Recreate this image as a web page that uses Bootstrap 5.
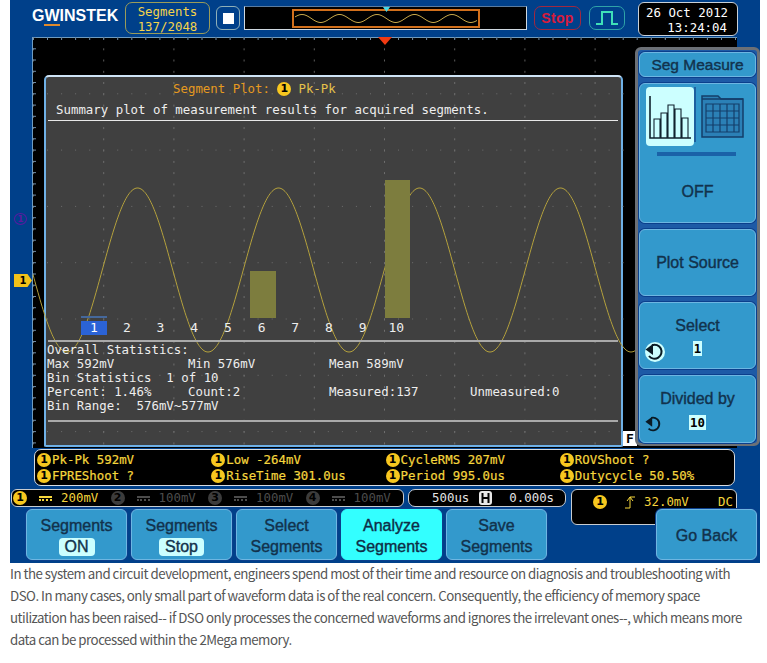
<!DOCTYPE html>
<html lang="en">
<head>
<meta charset="utf-8">
<title>Segment Plot</title>
<link href="https://cdn.jsdelivr.net/npm/bootstrap@5.3.0/dist/css/bootstrap.min.css" rel="stylesheet">
<style>
body{background:#fff;margin:0;overflow:hidden}
.dso{width:750px;height:563px;margin-left:10px;background:#00408a;position:relative;overflow:hidden}
.mono{font-family:"DejaVu Sans Mono","Liberation Mono",monospace;font-size:12.4px;line-height:14px}
.pre{white-space:pre}
.topbar{height:37px;padding-left:22px;position:relative}
.logo{width:93px;color:#fff;font:700 16px/16px "Liberation Sans",sans-serif;margin-top:-5px}
.logo u{text-decoration:none;border-bottom:2px solid #e08a2c}
.segbox{width:85px;height:32px;border:1px solid #9a9c5a;border-radius:7px;color:#f4d44a;text-align:center;margin-top:2px;padding-top:1px;line-height:15px}
.stopsq{width:24px;height:24px;border:1px solid #8fb0b8;border-radius:6px;margin:6px 4px 0 6px}
.stopsq i{display:block;width:11px;height:11px;background:#fff}
.overview{width:283px;height:24px;margin-top:6px;background:#000;border:1px solid #cfd8e0;border-top-color:#5a7ca0;position:relative}
.overview svg{position:absolute;left:0;top:0}
.stopbtn{width:47px;height:24px;margin:6px 0 0 7px;border:1px solid #a02840;border-radius:7px;color:#d81b3c;font:700 14px/22px "Liberation Sans",sans-serif;text-align:center;letter-spacing:.3px}
.pulsebtn{width:36px;height:24px;margin:6px 0 0 8px;border:1px solid #2fa3a8;border-radius:7px}
.datebox{width:100px;height:34px;margin:2px 0 0 13px;background:#000;border:1px solid #c8d0d8;border-radius:6px;color:#fff;padding:2px 4px 0 7px;line-height:15px}
.datebox div:last-child{text-align:right;padding-right:6px}
.screen{margin-left:22px;width:705px;height:411px;background:#000;position:relative;border-left:1px solid #6f9cc0;border-top:1px solid #6f9cc0}
.layer{position:absolute;left:-1px;top:-1px;z-index:1;pointer-events:none}
.wpanel{position:absolute;left:11px;top:37px;width:579px;height:372px;background:#404040;border:2px solid #6fb0e6;border-top-color:#cfe4f6;border-radius:5px 5px 2px 2px;color:#eee}
.ptitle{position:relative;z-index:2;color:#e69a1f;height:21px;padding:3px 0 0 127px}
.ptitle b{font-weight:400;color:#e6c24a;margin-left:6px}
.psub{position:relative;z-index:2;padding-left:10px;height:21px;line-height:23px}
.hr1{position:absolute;z-index:2;left:2px;width:570px;height:1px;background:#e8e8e8}
.hr2{position:absolute;z-index:2;left:2px;width:570px;height:2px;background:#a9a9a9}
.binbar{position:absolute;z-index:2;background:#7d7d3e}
.binrow{position:absolute;z-index:2;left:35px;top:244px}
.binrow span{width:33.7px;text-align:center;height:14px;color:#eee;font-size:13px}
.binrow span.on{background:#2b63d6;color:#fff;width:26px;margin:0 3px 0 0}
.seltop{position:absolute;z-index:2;left:35px;top:239px;width:26px;height:2px;background:#45689c}
.stats{position:absolute;z-index:2;left:1px;top:266px}
.stats span{width:141px;flex:none}
.ch1{position:absolute;left:-19px;top:236px;width:18px;height:13px;background:#f2c21a;color:#000;font:700 10px/13px "DejaVu Sans",sans-serif;text-align:center;clip-path:polygon(0 0,75% 0,100% 50%,75% 100%,0 100%);z-index:2}
.ch2{position:absolute;left:-19px;top:175px;width:13px;height:12px;border:1px solid #5a1aa0;border-radius:50%;color:#5a1aa0;font:700 9px/10px "DejaVu Sans",sans-serif;text-align:center;z-index:2}
.trigarrow{position:absolute;left:345px;top:-1px;width:0;height:0;border-left:7px solid transparent;border-right:7px solid transparent;border-top:8px solid #f23a12;z-index:2}
.fstrip{position:absolute;left:590px;top:393px;width:14px;height:15px;background:#fff;color:#000;font:700 13px/15px "DejaVu Sans Mono",monospace;text-align:center;z-index:2}
.menupane{position:absolute;z-index:3;left:602px;top:9px;width:125px;height:399px;background:#1d5aa6;border:3px solid #6c7076;border-radius:6px;padding:2px 1px 0 1px;gap:6px}
.kbtn{background:#3399cc;border:1px solid #6db6e2;box-shadow:0 0 0 1px #0b3f8c;border-radius:6px;color:#12324c;font:400 16px/21px "Liberation Sans",sans-serif;-webkit-text-stroke:.4px #12324c;padding:0;--bs-btn-hover-bg:#3399cc}
.kbtn.hot{background:#33ffff;color:#0c2c44;border-color:#33ffff}
.tagon{background:#ccffff;border-radius:4px;padding:0 6px;display:inline-block;line-height:18px;color:#12324c}
.tile{width:48px;height:59px;background:#ccffff;border-radius:4px;flex:none}
.slidebar{width:79px;height:4px;background:#1a62a8;margin:6px auto 0 11px}
.tabletick{width:2px;height:55px;background:#1d5f9f;margin-right:5px}
.valtag{background:#ccffff;color:#000;font-weight:700;-webkit-text-stroke:0;padding:0 1px;font-size:12.4px;line-height:14px}
.spin{position:absolute;left:4px;top:38px}
.meas{margin:1px 0 0 24px;width:701px;height:37px;background:#000;border:1px solid #d8dce0;border-radius:7px;color:#f5d63d;padding:2px 0 0 2px;-webkit-text-stroke:.2px #f5d63d}
.meas .cell{width:175px;height:16px}
.dot{flex:none;display:inline-block;width:14px;height:14px;border-radius:50%;background:#f7c71f;color:#000;font:700 11px/14px "DejaVu Sans",sans-serif;text-align:center;margin-right:1px;-webkit-text-stroke:0}
.dot.off{background:#3c3c3c;color:#000}
.chanrow{height:17px;margin-top:3px;position:relative}
.chans{margin-left:1px;width:393px;height:18px;background:#000;border:1px solid #c8ccd0;border-radius:6px;color:#f5d63d;padding-left:1px}
.chans .cell{width:100px}
.chans .dim{color:#4c4c4c}
.chans .eq{width:13px;height:5px;border-top:2px solid currentColor;border-bottom:2px dotted currentColor;margin:0 9px 0 11px;flex:none}
.tbase{margin-left:4px;width:158px;height:18px;background:#000;border:1px solid #c8ccd0;border-radius:7px;color:#e4e4e4;padding-left:23px}
.hold{margin:0 17px 0 10px}
.trig{margin-left:5px;width:166px;height:36px;background:#000;border:1px solid #c8ccd0;border-radius:6px 6px 0 6px;color:#f5d63d;padding:1px 3px 0 21px;position:relative;z-index:1}
.edge{margin:0 8px 0 16px}
.softrow{margin-top:3px;padding:0 3px 0 16px;gap:4px;position:relative;z-index:2}
.softrow .kbtn{width:101px;height:51px;padding-top:2px}
.desc{margin:0;padding:0 0 0 10px;width:746px;font-family:"Noto Sans CJK KR","Noto Sans",sans-serif;font-size:13.3px;line-height:22px;color:#555;letter-spacing:-.51px}
</style>
</head>
<body>
<div class="dso">
  <div class="topbar d-flex align-items-start">
    <div class="logo align-self-center">G<u>W</u>INSTEK</div>
    <div class="segbox mono">Segments<br>137/2048</div>
    <div class="stopsq d-flex align-items-center justify-content-center"><i></i></div>
    <div class="overview">
      <svg width="282" height="23" viewBox="243 7 282 23"><rect x="291" y="10" width="186" height="17" fill="none" stroke="#d2701c" stroke-width="2"/><path id="ovw" fill="none" stroke="#c8a84a" stroke-width="1"/><path d="M381 7h7l-3.5 5z" fill="#45d8e8"/></svg>
    </div>
    <div class="stopbtn">Stop</div>
    <div class="pulsebtn d-flex align-items-center justify-content-center"><svg width="24" height="16" viewBox="0 0 24 16"><path d="M1 14h6V2h10v12h6" fill="none" stroke="#3fe0b8" stroke-width="2"/></svg></div>
    <div class="datebox mono"><div>26 Oct 2012</div><div>13:24:04</div></div>
  </div>

  <div class="screen">
    <div class="trigarrow"></div>
    <div class="ch2">1</div>
    <div class="ch1">1</div>
    <div class="wpanel">
      <div class="ptitle mono d-flex align-items-center"><span class="pre">Segment Plot: </span><span class="dot">1</span><b>Pk-Pk</b></div>
      <div class="psub mono">Summary plot of measurement results for acquired segments.</div>
      <div class="hr1" style="top:43px"></div>
      <div class="binbar" style="left:204px;top:194px;width:26px;height:47px"></div>
      <div class="binbar" style="left:339px;top:103px;width:25px;height:138px"></div>
      <div class="seltop"></div>
      <div class="binrow mono d-flex"><span class="on">1</span><span>2</span><span>3</span><span>4</span><span>5</span><span>6</span><span>7</span><span>8</span><span>9</span><span>10</span></div>
      <div class="hr2" style="top:263px"></div>
      <div class="stats mono">
        <div>Overall Statistics:</div>
        <div class="d-flex"><span>Max 592mV</span><span>Min 576mV</span><span>Mean 589mV</span></div>
        <div class="pre">Bin Statistics  1 of 10</div>
        <div class="d-flex"><span>Percent: 1.46%</span><span>Count:2</span><span>Measured:137</span><span>Unmeasured:0</span></div>
        <div class="pre">Bin Range:  576mV~577mV</div>
      </div>
      <div class="hr2" style="top:343px"></div>
    </div>
    <svg class="layer" id="scopeart" width="705" height="411" viewBox="32 37 705 411"></svg>
    <div class="fstrip">F</div>
    <div class="menupane d-flex flex-column">
      <button class="btn kbtn" style="height:25px;font-size:15.5px;line-height:22px">Seg Measure</button>
      <div class="kbtn d-flex flex-column" style="height:140px;padding:3px 0 0 6px">
        <div class="d-flex">
          <div class="tile d-flex align-items-center justify-content-center">
            <svg width="44" height="46" viewBox="0 0 44 46"><path d="M2 2v42h41" fill="none" stroke="#10222e" stroke-width="1.6"/><g fill="none" stroke="#10222e" stroke-width="1.1"><path d="M6 44V25h6v19M13 44V19h6v25M20 44V11h6v33M27 44V15h6v29M34 44V24h6v20"/></g></svg>
          </div>
          <div class="tabletick"></div>
          <svg width="43" height="44" viewBox="0 0 43 44" style="margin-top:7px"><path d="M1 43V2h16l3 3h22v38z" fill="#2b80b6" stroke="#143e6a" stroke-width="1.5"/><path d="M1 5h41" stroke="#143e6a" stroke-width="1.5"/><g stroke="#143e6a" stroke-width="1.2"><path d="M5 10h33v28H5zM5 17h33M5 24h33M5 31h33M12 10v28M19 10v28M26 10v28M33 10v28" fill="none"/></g></svg>
        </div>
        <div class="slidebar"></div>
        <div class="text-center" style="margin:25px 0 0 -6px">OFF</div>
      </div>
      <button class="btn kbtn" style="height:67px">Plot Source</button>
      <div class="kbtn text-center position-relative" style="height:67px;padding-top:12px">Select
        <div class="mono" style="line-height:16px;margin-top:5px"><span class="valtag">1</span></div>
        <svg class="spin" width="22" height="22" viewBox="0 0 22 22"><circle cx="11" cy="11" r="10" fill="#ccffff"/><path d="M8 4.2A7 7 0 1 1 5 15" fill="none" stroke="#0a1a24" stroke-width="2"/><path d="M1.5 8.5 9 3v11z" fill="#0a1a24"/></svg>
      </div>
      <div class="kbtn text-center position-relative" style="height:68px;padding-top:12px">Divided by
        <div class="mono" style="line-height:16px;margin-top:6px"><span class="valtag">10</span></div>
        <svg class="spin" width="20" height="20" viewBox="0 0 22 22"><path d="M8 4.2A7 7 0 1 1 5 16" fill="none" stroke="#0a1a24" stroke-width="2"/><path d="M1.5 8.5 9 3v11z" fill="#0a1a24"/></svg>
      </div>
    </div>
  </div>

  <div class="meas mono">
    <div class="d-flex">
      <div class="cell d-flex align-items-center"><span class="dot">1</span>Pk-Pk 592mV</div>
      <div class="cell d-flex align-items-center"><span class="dot">1</span>Low -264mV</div>
      <div class="cell d-flex align-items-center"><span class="dot">1</span>CycleRMS 207mV</div>
      <div class="cell d-flex align-items-center"><span class="dot">1</span>ROVShoot ?</div>
    </div>
    <div class="d-flex">
      <div class="cell d-flex align-items-center"><span class="dot">1</span>FPREShoot ?</div>
      <div class="cell d-flex align-items-center"><span class="dot">1</span>RiseTime 301.0us</div>
      <div class="cell d-flex align-items-center"><span class="dot">1</span>Period 995.0us</div>
      <div class="cell d-flex align-items-center"><span class="dot">1</span>Dutycycle 50.50%</div>
    </div>
  </div>

  <div class="chanrow d-flex align-items-start">
    <div class="chans mono d-flex align-items-center">
      <div class="cell d-flex align-items-center"><span class="dot">1</span><i class="eq"></i>200mV</div>
      <div class="cell d-flex align-items-center dim"><span class="dot off">2</span><i class="eq"></i>100mV</div>
      <div class="cell d-flex align-items-center dim"><span class="dot off">3</span><i class="eq"></i>100mV</div>
      <div class="cell d-flex align-items-center dim"><span class="dot off">4</span><i class="eq"></i>100mV</div>
    </div>
    <div class="tbase mono d-flex align-items-center">500us<svg class="hold" width="13" height="14" viewBox="0 0 13 14"><rect width="13" height="14" rx="3" fill="#e8e8e8"/><path d="M3.5 2v10M9.5 2v10M3.5 7h6" stroke="#000" stroke-width="2"/></svg>0.000s</div>
    <div class="trig mono d-flex align-items-start"><span class="dot mt-1">1</span><svg class="edge mt-1" width="12" height="14" viewBox="0 0 12 14"><path d="M1 13h5V2h5M3 6l3-4 3 4" fill="none" stroke="#f5d63d" stroke-width="1"/></svg><span class="mt-1">32.0mV</span><span class="mt-1 ms-auto">DC</span></div>
  </div>

  <div class="softrow d-flex">
    <button class="btn kbtn">Segments<br><span class="tagon">ON</span></button>
    <button class="btn kbtn">Segments<br><span class="tagon">Stop</span></button>
    <button class="btn kbtn">Select<br>Segments</button>
    <button class="btn kbtn hot">Analyze<br>Segments</button>
    <button class="btn kbtn">Save<br>Segments</button>
    <button class="btn kbtn ms-auto">Go Back</button>
  </div>
</div>
<p class="desc">In the system and circuit development, engineers spend most of their time and resource on diagnosis and troubleshooting with DSO. In many cases, only small part of waveform data is of the real concern. Consequently, the efficiency of memory space utilization has been raised-- if DSO only processes the concerned waveforms and ignores the irrelevant ones--, which means more data can be processed within the 2Mega memory.</p>
<script>
(function(){
  var s='';
  var xs=[],ys=[],i,j;
  for(i=0;i<=10;i++)xs.push(33+70.2*i);
  for(i=0;i<=7;i++)ys.push(37+56.3*i);
  for(i=0;i<ys.length;i++)for(j=33;j<735;j+=14.04){
    var y=ys[i];var c=(y>75&&y<446&&j>44&&j<622)?'#6e6e6e':'#5a5a5a';
    s+='<rect x="'+j.toFixed(1)+'" y="'+y.toFixed(1)+'" width="1" height="1" fill="'+c+'"/>';
  }
  for(i=0;i<xs.length;i++)for(j=37;j<448;j+=11.26){
    var x=xs[i];var c2=(j>75&&j<446&&x>44&&x<622)?'#6e6e6e':'#5a5a5a';
    s+='<rect x="'+x.toFixed(1)+'" y="'+j.toFixed(1)+'" width="1" height="2" fill="'+c2+'"/>';
  }
  for(j=33;j<735;j+=14.04)s+='<rect x="'+j.toFixed(1)+'" y="37" width="1" height="3" fill="#6f8ca8"/>';
  for(j=37;j<448;j+=11.26)s+='<rect x="33" y="'+j.toFixed(1)+'" width="3" height="1" fill="#6f8ca8"/>';
  var p=[];
  for(var px=33;px<=636;px+=1){
    var yy=270-82*Math.cos(2*Math.PI*(px-137.5)/141);
    p.push(px+','+yy.toFixed(1));
  }
  s+='<polyline points="'+p.join(' ')+'" fill="none" stroke="#b9a53c" stroke-width="1" opacity=".95"/>';
  document.getElementById('scopeart').innerHTML=s;
  var d='';
  for(var q=293;q<=475;q++){
    var yo=18.5-4*Math.cos(2*Math.PI*(q-300)/37.5);
    d+=(q==293?'M':'L')+q+' '+yo.toFixed(1);
  }
  document.getElementById('ovw').setAttribute('d',d);
})();
</script>
<script src="https://cdn.jsdelivr.net/npm/bootstrap@5.3.0/dist/js/bootstrap.bundle.min.js"></script>
</body>
</html>
